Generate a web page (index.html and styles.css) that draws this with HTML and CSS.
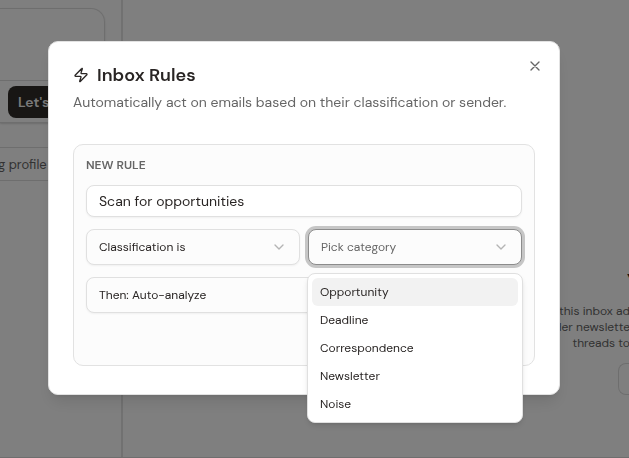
FILE: index.html
```html
<!DOCTYPE html>
<html lang="en">
<head>
    <meta charset="UTF-8">
    <meta name="viewport" content="width=device-width, initial-scale=1.0">
    <title>Inbox Rules</title>
    <link rel="stylesheet" href="styles.css">
</head>
<body>
    <!-- Page behind the dialog -->
    <div class="page">
        <aside class="sidebar">
            <div class="chat-card">
                <div class="chat-body"></div>
                <div class="chat-footer">
                    <button type="button" class="chat-button">Let's</button>
                </div>
            </div>
            <button type="button" class="profile-button">g profile</button>
        </aside>
        <main class="content">
            <h2 class="empty-title">Y</h2>
            <p class="empty-text">this inbox ad<br>der newslette<br>threads to</p>
            <div class="empty-action"></div>
        </main>
    </div>

    <!-- Dialog -->
    <div class="overlay">
        <div class="dialog" role="dialog" aria-labelledby="dialog-title">
            <button type="button" class="close" aria-label="Close">
                <svg viewBox="0 0 24 24" class="icon"><path d="M18 6 6 18M6 6l12 12"/></svg>
            </button>
            <header class="dialog-header">
                <h1 id="dialog-title">
                    <svg viewBox="0 0 24 24" class="icon"><path d="M4 14a1 1 0 0 1-.78-1.63l9.9-10.2a.5.5 0 0 1 .86.46l-1.92 6.02A1 1 0 0 0 13 10h7a1 1 0 0 1 .78 1.63l-9.9 10.2a.5.5 0 0 1-.86-.46l1.92-6.02A1 1 0 0 0 11 14z"/></svg>
                    Inbox Rules
                </h1>
                <p>Automatically act on emails based on their classification or sender.</p>
            </header>

            <form class="rule-card">
                <label class="rule-label" for="rule-name">NEW RULE</label>
                <input type="text" id="rule-name" class="rule-name" value="Scan for opportunities">

                <div class="rule-row">
                    <div class="select">
                        <select aria-label="Condition">
                            <option>Classification is</option>
                        </select>
                        <svg viewBox="0 0 24 24" class="icon chevron"><path d="m6 9 6 6 6-6"/></svg>
                    </div>
                    <div class="select select-open">
                        <select aria-label="Category">
                            <option>Pick category</option>
                        </select>
                        <svg viewBox="0 0 24 24" class="icon chevron"><path d="m6 9 6 6 6-6"/></svg>
                        <ul class="menu" role="listbox" aria-label="Category">
                            <li role="option" class="active" aria-selected="true">Opportunity</li>
                            <li role="option">Deadline</li>
                            <li role="option">Correspondence</li>
                            <li role="option">Newsletter</li>
                            <li role="option">Noise</li>
                        </ul>
                    </div>
                </div>

                <div class="select">
                    <select aria-label="Action">
                        <option>Then: Auto-analyze</option>
                    </select>
                    <svg viewBox="0 0 24 24" class="icon chevron"><path d="m6 9 6 6 6-6"/></svg>
                </div>
                <div class="rule-actions"></div>
            </form>
        </div>
    </div>
</body>
</html>
```

FILE: styles.css
```css
* {
    box-sizing: border-box;
}
body {
    margin: 0;
    font-family: "DM Sans", Inter, "Liberation Sans", sans-serif;
    font-size: 14px;
    color: #292524;
    overflow: hidden;
}
button, input, select {
    font: inherit;
    color: inherit;
}
h1, h2, p, ul {
    margin: 0;
    padding: 0;
}
.icon {
    width: 16px;
    height: 16px;
    fill: none;
    stroke: currentColor;
    stroke-width: 2;
    stroke-linecap: round;
    stroke-linejoin: round;
}

/* Page */
.page {
    display: grid;
    grid-template-columns: 123px 1fr;
    height: 100vh;
    border-bottom: 1px solid #ddd;
}
.sidebar {
    padding-top: 8px;
    border-right: 2px solid #e2e2e2;
}
.chat-card {
    margin-right: 16px;
    border: 1px solid #ddd;
    border-left: none;
    border-radius: 0 14px 14px 0;
    box-shadow: 0 1px 2px rgba(0, 0, 0, 0.15);
}
.chat-body {
    height: 72px;
    border-bottom: 1px solid #ddd;
}
.chat-footer {
    display: flex;
    padding: 5px 8px 4px;
}
.chat-button {
    flex: 1;
    height: 32px;
    padding: 0 10px;
    border: none;
    border-radius: 8px;
    background: #302c28;
    color: #f5f5f4;
    font-weight: 600;
    text-align: left;
}
.profile-button {
    display: block;
    width: 96px;
    height: 34px;
    margin-top: 24px;
    padding: 0;
    border: 1px solid #ddd;
    border-left: none;
    border-radius: 0 8px 8px 0;
    background: none;
    color: #666;
    font-size: 13px;
    text-align: left;
    text-indent: -2px;
}
.content {
    display: flex;
    flex-direction: column;
    align-items: flex-end;
    padding-top: 270px;
}
.empty-title {
    width: 2px;
    overflow: hidden;
    font-size: 16px;
    line-height: 20px;
}
.empty-text {
    margin-top: 13px;
    margin-right: -1px;
    color: #666;
    font-size: 12px;
    line-height: 16px;
    text-align: right;
    white-space: nowrap;
}
.empty-action {
    width: 11px;
    height: 32px;
    margin-top: 12px;
    border: 1px solid #ddd;
    border-right: none;
    border-radius: 8px 0 0 8px;
}

/* Dialog */
.overlay {
    position: fixed;
    inset: 0;
    padding: 41px 69px 0 48px;
    background: rgba(0, 0, 0, 0.5);
}
.dialog {
    position: relative;
    padding: 24px 24px 28px;
    border: 1px solid #e2e2e2;
    border-radius: 10px;
    background: #fff;
    box-shadow: 0 10px 15px -3px rgba(0, 0, 0, 0.1), 0 4px 6px -4px rgba(0, 0, 0, 0.1);
}
.close {
    position: absolute;
    top: 16px;
    right: 16px;
    display: flex;
    padding: 0;
    border: none;
    background: none;
    color: #666;
}
.dialog-header {
    display: grid;
    gap: 8px;
    margin-bottom: 32px;
}
.dialog-header h1 {
    display: flex;
    align-items: center;
    gap: 8px;
    font-size: 18px;
    font-weight: 600;
    line-height: 18px;
}
.dialog-header p {
    color: #666;
    line-height: 20px;
    white-space: nowrap;
}

/* Rule form */
.rule-card {
    display: grid;
    gap: 12px;
    padding: 12px;
    border: 1px solid #e2e2e2;
    border-radius: 10px;
    background: #fcfcfc;
}
.rule-label {
    color: #666;
    font-size: 12px;
    font-weight: 600;
    line-height: 16px;
}
.rule-name {
    width: 100%;
    height: 32px;
    padding: 0 12px;
    border: 1px solid #e0e0e0;
    border-radius: 8px;
    background: #fff;
    box-shadow: 0 1px 2px rgba(0, 0, 0, 0.05);
}
.rule-row {
    display: grid;
    grid-template-columns: 1fr 1fr;
    gap: 8px;
}
.select {
    position: relative;
    display: flex;
    align-items: center;
}
.select select {
    appearance: none;
    width: 100%;
    height: 36px;
    padding: 0 36px 0 12px;
    border: 1px solid #e0e0e0;
    border-radius: 8px;
    background: #fcfcfc;
    box-shadow: 0 1px 2px rgba(0, 0, 0, 0.05);
    font-size: 12px;
}
.select-open select {
    border-color: #8c8c8c;
    box-shadow: 0 0 0 3px #c6c6c6;
    color: #666;
}
.chevron {
    position: absolute;
    right: 13px;
    color: #b4b4b4;
    pointer-events: none;
}
.menu {
    position: absolute;
    z-index: 1;
    top: 44px;
    left: -1px;
    right: -1px;
    padding: 4px;
    border: 1px solid #e0e0e0;
    border-radius: 8px;
    background: #fff;
    box-shadow: 0 4px 6px -1px rgba(0, 0, 0, 0.1), 0 2px 4px -2px rgba(0, 0, 0, 0.1);
    font-size: 12px;
    line-height: 28px;
    list-style: none;
}
.menu li {
    padding: 0 8px;
    border-radius: 6px;
}
.menu .active {
    background: #f2f2f2;
}
.rule-actions {
    height: 28px;
}
```
